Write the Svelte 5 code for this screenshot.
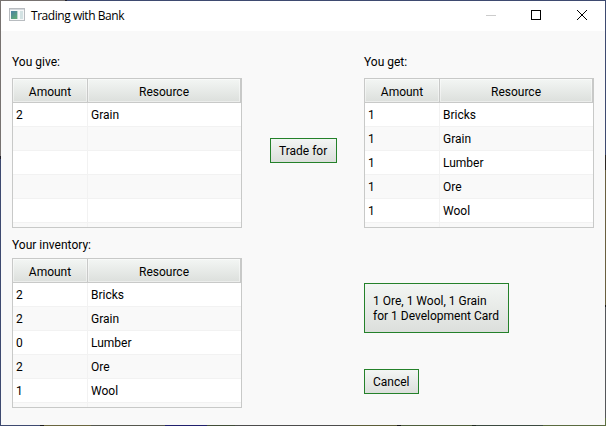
<script>
  const give = [['2', 'Grain'], ['', ''], ['', ''], ['', ''], ['', '']];
  const get = [['1', 'Bricks'], ['1', 'Grain'], ['1', 'Lumber'], ['1', 'Ore'], ['1', 'Wool']];
  const inventory = [['2', 'Bricks'], ['2', 'Grain'], ['0', 'Lumber'], ['2', 'Ore'], ['1', 'Wool']];
</script>

{#snippet table(rows)}
  <div class="table">
    <div class="head">
      <div class="th amount">Amount</div>
      <div class="th resource">Resource</div>
    </div>
    {#each [...rows, ['', '']] as row}
      <div class="row">
        <div class="td amount">{row[0]}</div>
        <div class="td resource">{row[1]}</div>
      </div>
    {/each}
  </div>
{/snippet}

<div class="window">
  <header>
    <svg class="app-icon" width="16" height="13" viewBox="0 0 16 13" shape-rendering="crispEdges">
      <defs>
        <linearGradient id="pane" x1="0" y1="0" x2="0.6" y2="1">
          <stop offset="0" stop-color="#4a7fa5" />
          <stop offset="1" stop-color="#5fa878" />
        </linearGradient>
      </defs>
      <rect x="0.5" y="0.5" width="15" height="12" fill="#f6f7f8" stroke="#b8bcc0" />
      <rect x="1" y="1" width="14" height="1" fill="#d5d9dd" />
      <rect x="2" y="3" width="6" height="8" fill="url(#pane)" />
      <rect x="8" y="3" width="1" height="8" fill="#b9d3cf" />
      <rect x="11" y="3" width="3" height="8" fill="#d3e2e3" />
    </svg>
    <span class="title">Trading with Bank</span>
    <svg class="controls" width="138" height="29" viewBox="0 0 138 29">
      <path d="M19 14.5h10" stroke="#ccc" />
      <rect x="64.5" y="9.5" width="9" height="9" fill="none" stroke="#000" />
      <path d="M110 9l10 10M120 9l-10 10" stroke="#000" />
    </svg>
  </header>
  <main>
    <section class="left">
      <div class="label">You give:</div>
      {@render table(give)}
      <div class="label second">Your inventory:</div>
      {@render table(inventory)}
    </section>
    <section class="middle">
      <button class="trade">Trade for</button>
    </section>
    <section class="right">
      <div class="label">You get:</div>
      {@render table(get)}
      <button class="card">1 Ore, 1 Wool, 1 Grain<br />for 1 Development Card</button>
      <button class="cancel">Cancel</button>
    </section>
  </main>
</div>

<style>
  :global(body) {
    margin: 0;
    overflow: hidden;
  }
  .window {
    box-sizing: border-box;
    width: 606px;
    height: 426px;
    padding: 1px;
    background:
      linear-gradient(#f9f9f9, #f9f9f9) 1px 1px / 604px 424px no-repeat,
      linear-gradient(90deg, #777270 65px, #20202a 65px 67px, #3e4a70 67px) 0 0 / 606px 1px no-repeat,
      linear-gradient(90deg, #3e4a70 40px, #191919 40px 44px, #6a6640 44px 91px, #55574e 91px 165px, #20206c 165px 207px, #414d38 207px 235px, #4c4c4c 235px 350px, #5c5d38 350px 397px, #151515 397px 401px, #4e5d3c 401px 472px, #202a20 472px 476px, #3c4a40 476px 543px, #5a6b40 543px) 0 425px / 606px 1px no-repeat,
      linear-gradient(#777270 156px, #20202a 156px 159px, #3e4a70 159px) 0 0 / 1px 426px no-repeat,
      linear-gradient(#3e4a70 155px, #2a2522 155px 170px, #6a6040 170px 305px, #151515 305px 307px, #55575a 307px 418px, #5c7040 418px) 605px 0 / 1px 426px no-repeat;
    font: 12px/15px Roboto, sans-serif;
    color: #000;
  }
  header {
    display: flex;
    align-items: center;
    height: 30px;
    background: #fff;
  }
  .app-icon {
    margin: 7px 0 0 8px;
    flex: none;
    align-self: flex-start;
  }
  .title {
    margin-left: 6px;
    font: 12px/16px "Open Sans", "Noto Sans", sans-serif;
    letter-spacing: -0.45px;
    flex: 1;
  }
  .controls {
    flex: none;
    align-self: flex-start;
  }
  main {
    display: flex;
    padding: 23px 11px 0;
  }
  .left,
  .right {
    width: 230px;
  }
  .middle {
    width: 122px;
    display: flex;
    justify-content: center;
    align-items: flex-start;
    padding-top: 84px;
    box-sizing: border-box;
  }
  .label {
    box-sizing: border-box;
    height: 15px;
    padding-top: 1px;
    margin-bottom: 9px;
  }
  .second {
    margin: 9px 0 6px;
  }
  .table {
    box-sizing: border-box;
    width: 230px;
    height: 150px;
    border: 1px solid #c8c9c8;
    overflow: hidden;
    background: #fff;
  }
  .head {
    display: flex;
    height: 23px;
    border-bottom: 1px solid #c8c9c8;
  }
  .th {
    box-sizing: border-box;
    height: 23px;
    text-align: center;
    line-height: 23px;
    border-right: 1px solid #c8c9c8;
    background: linear-gradient(#f3f6f4, #dcdfdc);
    box-shadow: inset 0 0 0 1px rgba(255, 255, 255, 0.45);
    padding-top: 2px;
  }
  .amount {
    width: 75px;
  }
  .resource {
    width: 153px;
  }
  .row {
    display: flex;
    height: 24px;
  }
  .row:nth-child(odd) {
    background: #f9f9f9;
  }
  .td {
    box-sizing: border-box;
    height: 24px;
    padding: 1px 0 0 3px;
    line-height: 23px;
    border-bottom: 1px solid #f2f2f2;
    border-right: 1px solid #f2f2f2;
  }
  .td.resource {
    border-right: 0;
  }
  button {
    display: block;
    box-sizing: border-box;
    width: 67px;
    height: 25px;
    padding: 2px 8px 0;
    border: 1px solid #24812a;
    border-radius: 0;
    background: linear-gradient(#f3f6f4, #dcdfdc);
    font: inherit;
    color: #000;
    text-align: left;
    white-space: nowrap;
  }
  .trade {
    padding-left: 8.5px;
  }
  .card {
    width: 145px;
    height: 50px;
    margin-top: 55px;
  }
  .cancel {
    width: 55px;
    margin-top: 36px;
  }
</style>
